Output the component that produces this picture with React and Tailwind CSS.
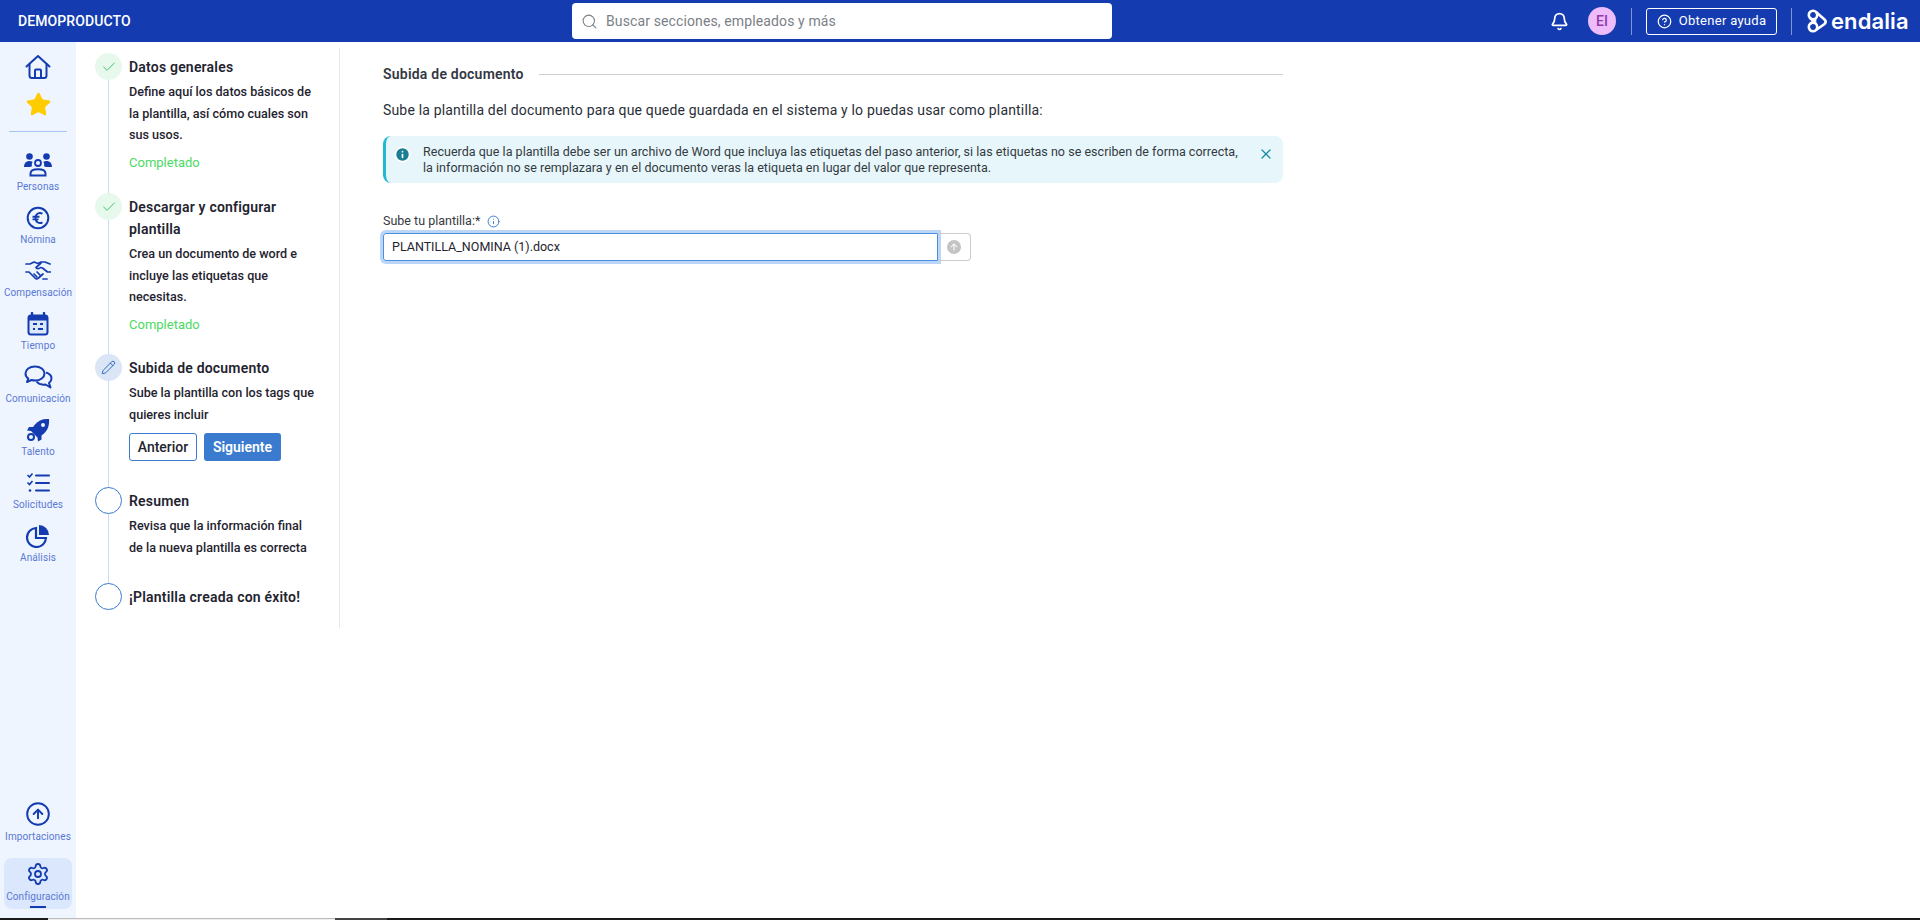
import React from "react";
import { Search, Bell, CircleHelp, Check, Pencil, X, Settings, Star, CircleArrowUp, Info, ArrowUp } from "lucide-react";

function NavItem({ icon, label }) {
  return (
    <div className="flex h-[53px] flex-col items-center">
      <div className="flex h-[32px] items-center justify-center text-[#143cb0]">{icon}</div>
      <span className="whitespace-nowrap text-[10px] leading-[12px] tracking-[0.1px] text-[#5a78d4]">{label}</span>
    </div>
  );
}

const HomeIcon = () => (
  <svg width="26" height="26" viewBox="0 0 26 26" fill="none" stroke="#143cb0" strokeWidth="2" strokeLinecap="round" strokeLinejoin="round">
    <path d="M1.500 12.500L13 2l11.500 10.500" />
    <path d="M4.500 10.500V21.500a2.500 2.500 0 0 0 2.500 2.500h12a2.500 2.500 0 0 0 2.500-2.500V10.500" />
    <path d="M10 24v-7.500a1 1 0 0 1 1-1h4a1 1 0 0 1 1 1V24" />
  </svg>
);

const PeopleIcon = () => (
  <svg width="28" height="24" viewBox="0 0 28 24" fill="#143cb0">
    <circle cx="5.500" cy="3.500" r="3.300" />
    <circle cx="22.500" cy="3.500" r="3.300" />
    <path d="M0 14c0-4 2.500-6 5.500-6 1.200 0 2.300.3 3.200.9-1 1.300-1.200 3-.6 4.400C7 13.700 6 14 5.500 14z" />
    <path d="M28 14c0-4-2.500-6-5.500-6-1.200 0-2.300.3-3.200.9 1 1.300 1.200 3 .6 4.400 1.100.4 2.100.7 2.600.7z" />
    <circle cx="14" cy="10" r="3" fill="none" stroke="#143cb0" strokeWidth="1.800" />
    <path d="M6.500 22.500v-2c0-3 3-4.300 7.500-4.300s7.500 1.300 7.500 4.300v2z" fill="none" stroke="#143cb0" strokeWidth="2" />
  </svg>
);

const EuroIcon = () => (
  <svg width="24" height="24" viewBox="0 0 24 24" fill="none" stroke="#143cb0">
    <circle cx="12" cy="12" r="10.300" strokeWidth="2" />
    <path d="M16.500 7.700c-3-1.700-7-.3-7 4.300s4 6 7 4.300M6.500 10.800h7M6.500 13.400h6" strokeWidth="1.900" />
  </svg>
);

const RocketIcon = () => (
  <svg width="24" height="24" viewBox="0 0 24 24" fill="#143cb0">
    <path d="M23 1c-6-.5-11 1.500-14 5.500L7 9H3L1 12.500l4 .5 6.500 6.500.5 4 3.500-2v-4l2.500-2C22 12 23.500 7 23 1z" />
    <circle cx="17" cy="7" r="2" fill="#eef5ff" />
    <circle cx="5" cy="19" r="3" fill="none" stroke="#143cb0" strokeWidth="2" />
  </svg>
);

const PieIcon = () => (
  <svg width="24" height="24" viewBox="0 0 24 24" fill="none">
    <path d="M10 4a9.500 9.500 0 1 0 10 10H10z" stroke="#143cb0" strokeWidth="2.200" />
    <path d="M13 1a10 10 0 0 1 10 10H13z" fill="#143cb0" />
  </svg>
);

const ChecklistIcon = () => (
  <svg width="24" height="24" viewBox="0 0 24 24" fill="none" stroke="#143cb0" strokeWidth="2">
    <path d="M1.500 4l2 2 3-3.500M1.500 11.500l2 2 3-3.500" strokeWidth="1.600" />
    <path d="M10 4.500h13M10 12h13M10 19.500h13" strokeLinecap="round" />
    <circle cx="4" cy="19.500" r="1.300" fill="#143cb0" stroke="none" />
  </svg>
);

const CalIcon = () => (
  <svg width="22" height="24" viewBox="0 0 22 24" fill="none">
    <path d="M5 1v4M17 1v4" stroke="#143cb0" strokeWidth="2.400" strokeLinecap="round" />
    <rect x="1.500" y="3.500" width="19" height="19" rx="2.500" stroke="#143cb0" strokeWidth="2" fill="#dbe7fb" />
    <rect x="1.500" y="3.500" width="19" height="5" fill="#143cb0" />
    <path d="M6 12h4M13 12h3M6 17h2M11 17h5" stroke="#143cb0" strokeWidth="2" />
  </svg>
);

const ChatIcon = () => (
  <svg width="29" height="24" viewBox="0 0 29 24" fill="none" stroke="#143cb0" strokeWidth="2" strokeLinejoin="round">
    <path d="M11 1.500c-5.500 0-9.500 3.200-9.500 7 0 2 1 3.800 2.800 5L3 17l4.500-2c1.100.3 2.300.5 3.500.5 5.500 0 9.500-3.200 9.500-7s-4-7-9.500-7z" />
    <path d="M22 7.500c3.300 1 5.500 3.200 5.500 6 0 1.800-1 3.300-2.500 4.500l1.500 4.500-5-3c-3.500.5-7-.5-9-3" />
  </svg>
);

const HandIcon = () => (
  <svg width="26" height="22" viewBox="0 0 26 22" fill="none" stroke="#143cb0" strokeWidth="1.700" strokeLinecap="round" strokeLinejoin="round">
    <path d="M1 4h4l4-2 4 1.500 3-1.500h4l5 2" />
    <path d="M16 3l-5 4.500c1 1.500 3 1.500 4.500 0l2 .5 5 4h3" />
    <path d="M1 12h3l6 6c1 1 2.500 1 3.500 0l4.500-4" />
    <path d="M9 14l3 3M12 12l3 3" />
    <path d="M18 19h4" />
  </svg>
);

function Step({ state, title, children, pb }) {
  return (
    <div className={`relative pl-[34px] pt-[2.500px] ${pb}`}>
      {state === "done" && (
        <div className="absolute left-0 top-0 flex h-[27px] w-[27px] items-center justify-center rounded-full bg-[#e7f8ec]">
          <Check size={16} strokeWidth={1.500} className="text-[#3fc56a]" />
        </div>
      )}
      {state === "edit" && (
        <div className="absolute left-0 top-0 flex h-[27px] w-[27px] items-center justify-center rounded-full bg-[#dae5f6]">
          <Pencil size={15} strokeWidth={1.600} className="text-[#2f6cc4]" />
        </div>
      )}
      {state === "todo" && (
        <div className="absolute left-0 top-0 h-[27px] w-[27px] rounded-full border border-[#3a7bd0] bg-white" />
      )}
      <div className="w-[190px] text-[14px] font-semibold leading-[22px] tracking-[0.2px] text-[#1f2430]">{title}</div>
      {children}
    </div>
  );
}

const Desc = ({ children }) => (
  <p className="mt-[3.500px] w-[190px] text-[12.600px] font-medium leading-[21.500px] text-[#1f2430]">{children}</p>
);
const Done = () => <div className="mt-[7.500px] text-[13px] leading-[20px] text-[#4cd964]">Completado</div>;

export default function App() {
  return (
    <div className="flex h-[920px] w-[1920px] flex-col overflow-hidden bg-white font-['Roboto',sans-serif]">
      <header className="flex h-[42px] shrink-0 items-center bg-[#143cb0] pl-[18px] pr-[14px]">
        <span className="w-[554px] text-[14px] font-medium tracking-[0.1px] text-white">DEMOPRODUCTO</span>
        <div className="flex h-[36px] w-[540px] items-center rounded-[4px] bg-white pl-[9px]">
          <Search size={17} strokeWidth={1.500} className="text-[#7b7f87]" />
          <span className="ml-[8px] text-[14px] tracking-[0.12px] text-[#7b7f87]">Buscar secciones, empleados y más</span>
        </div>
        <div className="ml-auto flex items-center">
          <Bell size={19} strokeWidth={2.200} className="text-white" />
          <div className="ml-[19px] flex h-[28px] w-[28px] items-center justify-center rounded-full bg-[#eebcfb] text-[14px] font-medium text-[#8e3aa8]">EI</div>
          <div className="ml-[15px] h-[27px] w-px bg-[#7e95d8]" />
          <div className="ml-[14px] flex h-[27px] w-[131px] items-center justify-center gap-[7px] rounded-[3px] border border-white text-[13px] tracking-[0.3px] text-white">
            <CircleHelp size={15} strokeWidth={2} />
            <span>Obtener ayuda</span>
          </div>
          <div className="ml-[14px] h-[27px] w-px bg-[#7e95d8]" />
          <svg width="20" height="24" viewBox="0 0 20 24" fill="none" stroke="white" strokeWidth="2.600" className="ml-[15px]">
            <circle cx="6" cy="6" r="4.200" />
            <circle cx="6" cy="18" r="4.200" />
            <path d="M9 3l8.500 7.500c1.500 1.500 1.500 3 0 4.500L9 21M3 9l6 5M3 15l6-5" />
          </svg>
          <span className="ml-[4px] w-[75px] text-[22px] font-semibold leading-none tracking-[0.1px] text-white" style={{ fontFamily: "Inter, sans-serif" }}>endalia</span>
        </div>
      </header>
      <div className="flex min-h-0 flex-1">
        <aside className="flex w-[76px] shrink-0 flex-col bg-[#eef5ff]">
          <div className="flex flex-col items-center pt-[12px]">
            <HomeIcon />
            <Star size={27} strokeWidth={1} fill="#ffcc00" className="mt-[11px] text-[#ffcc00]" />
            <div className="mt-[13px] h-px w-[58px] bg-[#a9c4f2]" />
          </div>
          <div className="mt-[17px] flex flex-col">
            <NavItem icon={<PeopleIcon />} label="Personas" />
            <NavItem icon={<EuroIcon />} label="Nómina" />
            <NavItem icon={<HandIcon />} label="Compensación" />
            <NavItem icon={<CalIcon />} label="Tiempo" />
            <NavItem icon={<ChatIcon />} label="Comunicación" />
            <NavItem icon={<RocketIcon />} label="Talento" />
            <NavItem icon={<ChecklistIcon />} label="Solicitudes" />
            <NavItem icon={<PieIcon />} label="Análisis" />
          </div>
          <div className="mt-auto flex flex-col items-center pb-[9px]">
            <CircleArrowUp size={26} strokeWidth={1.800} className="text-[#143cb0]" />
            <span className="mt-[4px] text-[10px] leading-[12px] tracking-[0.1px] text-[#5a78d4]">Importaciones</span>
            <div className="relative mt-[15px] flex h-[51px] w-[68px] flex-col items-center rounded-[8px] bg-[#dbe7fd] pt-[4px]">
              <Settings size={24} strokeWidth={1.800} className="text-[#143cb0]" />
              <span className="mt-[5px] text-[10px] leading-[12px] tracking-[0.1px] text-[#5a78d4]">Configuración</span>
              <div className="absolute bottom-[1px] h-[2px] w-[16px] bg-[#143cb0]" />
            </div>
          </div>
        </aside>
        <div className="w-[264px] shrink-0 pl-[19px] pt-[6px]">
          <div className="relative w-[245px] border-r border-[#e6e8ec] pt-[5px]">
            <div className="absolute bottom-[40px] left-[13px] top-[18px] w-px bg-[#c8dcf5]" />
            <Step state="done" title="Datos generales" pb="pb-[20px]">
              <Desc>Define aquí los datos básicos de la plantilla, así cómo cuales son sus usos.</Desc>
              <Done />
            </Step>
            <Step state="done" title="Descargar y configurar plantilla" pb="pb-[19px]">
              <Desc>Crea un documento de word e incluye las etiquetas que necesitas.</Desc>
              <Done />
            </Step>
            <Step state="edit" title="Subida de documento" pb="pb-[26px]">
              <Desc>Sube la plantilla con los tags que quieres incluir</Desc>
              <div className="mt-[8px] flex gap-[7px]">
                <button className="h-[28px] w-[68px] rounded-[3px] border border-[#3a7bd0] text-[14px] font-medium text-[#1f2430]">Anterior</button>
                <button className="h-[28px] w-[77px] rounded-[3px] bg-[#3a7bd0] text-[14px] font-semibold text-white">Siguiente</button>
              </div>
            </Step>
            <Step state="todo" title="Resumen" pb="pb-[25px]">
              <Desc>Revisa que la información final de la nueva plantilla es correcta</Desc>
            </Step>
            <Step state="todo" title="¡Plantilla creada con éxito!" pb="pb-[20px]" />
          </div>
        </div>
        <main className="w-[943px] shrink-0 pl-[43px] pt-[22px]">
          <div className="flex items-center">
            <h2 className="shrink-0 text-[14px] font-semibold leading-[20px] tracking-[0.22px] text-[#333842]">Subida de documento</h2>
            <div className="ml-[15px] h-px flex-1 bg-[#d0d0d0]" />
          </div>
          <p className="mt-[16px] text-[14px] leading-[20px] tracking-[0.17px] text-[#2a2e37]">Sube la plantilla del documento para que quede guardada en el sistema y lo puedas usar como plantilla:</p>
          <div className="mt-[16px] flex h-[47px] items-start rounded-[8px] border-l-[3px] border-[#22b8cf] bg-[#e6f6fb] pl-[8px] pr-[9px]">
            <Info size={17} strokeWidth={2.400} fill="#1a7f93" className="mt-[10px] text-white" />
            <p className="ml-[12px] mr-[14px] mt-[7.500px] flex-1 text-[12.500px] leading-[16px] tracking-[0.03px] text-[#343a40]">
              Recuerda que la plantilla debe ser un archivo de Word que incluya las etiquetas del paso anterior, si las etiquetas no se escriben de forma correcta, la información no se remplazara y en el documento veras la etiqueta en lugar del valor que representa.
            </p>
            <X size={16} strokeWidth={1.800} className="mt-[10px] text-[#1a8ba0]" />
          </div>
          <div className="mt-[30px] flex h-[16px] items-center">
            <span className="text-[12.500px] leading-[16px] text-[#343a40]">Sube tu plantilla:*</span>
            <Info size={13} strokeWidth={1.800} className="ml-[7px] text-[#3a7bd0]" />
          </div>
          <div className="mt-[4px] flex h-[28px] w-[588px]">
            <div className="flex flex-1 items-center rounded-l-[3px] border border-[#4a90e2] pl-[8px] text-[12.500px] text-[#1f2430] shadow-[0_0_0_3px_#bcd6f8]">
              PLANTILLA_NOMINA (1).docx
            </div>
            <div className="flex w-[33px] items-center justify-center rounded-r-[4px] border border-l-0 border-[#cccccc]">
              <div className="flex h-[14px] w-[14px] items-center justify-center rounded-full bg-[#c4c4c4]">
                <ArrowUp size={10} strokeWidth={2.500} className="text-white" />
              </div>
            </div>
          </div>
        </main>
      </div>
      <div className="flex h-[2px] shrink-0 bg-[#1a1a1a]">
        <div className="ml-[48px] h-full w-[287px] border-t border-[#bbbbbb] bg-[#eeeeee]" />
        <div className="h-full w-[52px] bg-[#444444]" />
      </div>
    </div>
  );
}
